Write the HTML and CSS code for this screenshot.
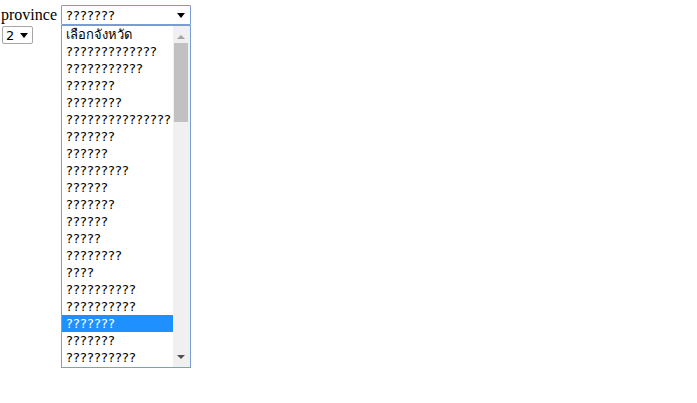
FILE: index.html
```html
<!DOCTYPE html>
<html>
<head>
<meta charset="utf-8">
<link rel="stylesheet" href="styles.css">
</head>
<body>
<div class="page">
<div class="row1">
  <span class="label">province</span>
  <div class="select main">
    <span class="value">???????</span>
    <span class="arrow"></span>
    <div class="dropdown">
      <ul class="options">
        <li>เลือกจังหวัด</li>
        <li>?????????????</li>
        <li>???????????</li>
        <li>???????</li>
        <li>????????</li>
        <li>???????????????</li>
        <li>???????</li>
        <li>??????</li>
        <li>?????????</li>
        <li>??????</li>
        <li>???????</li>
        <li>??????</li>
        <li>?????</li>
        <li>????????</li>
        <li>????</li>
        <li>??????????</li>
        <li>??????????</li>
        <li class="selected">???????</li>
        <li>???????</li>
        <li>??????????</li>
      </ul>
      <div class="scrollbar">
        <span class="sb-up"></span>
        <span class="sb-thumb"></span>
        <span class="sb-down"></span>
      </div>
    </div>
  </div>
</div>
<div class="row2">
  <div class="select small">
    <span class="value">2</span>
    <span class="arrow"></span>
  </div>
</div>
</div>
</body>
</html>
```
FILE: styles.css
```css
html, body {
  margin: 0;
  padding: 0;
  background: #ffffff;
}
body {
  font-family: "Liberation Serif", "Times New Roman", serif;
  font-size: 16px;
  color: #000;
}
.page {
  min-height: 403px;
  padding-left: 1px;
}
.row1 {
  display: flex;
  align-items: flex-start;
  height: 25px;
  padding-top: 5px;
  box-sizing: border-box;
  position: relative;
  z-index: 2;
}
.label {
  line-height: 20px;
  margin-right: 4px;
}
.select {
  position: relative;
  box-sizing: border-box;
  display: flex;
  align-items: center;
  font-family: "DejaVu Sans", "Noto Sans", sans-serif;
  font-size: 13px;
  color: #000;
  background: #fff;
}
.main {
  width: 130px;
  height: 20px;
  border: 1px solid #7a9bd6;
  border-radius: 1px;
  padding-left: 4px;
}
.main .value {
  flex: 1;
  letter-spacing: 0.1px;
}
.arrow {
  width: 0;
  height: 0;
  border-left: 4px solid transparent;
  border-right: 4px solid transparent;
  border-top: 5px solid #000;
}
.main .arrow {
  margin-right: 5px;
}
.row2 {
  display: flex;
  padding-left: 1px;
  padding-top: 1px;
}
.small {
  width: 31px;
  height: 18px;
  border: 1px solid #a6a6a6;
  border-radius: 2px;
  padding-left: 3px;
  gap: 6px;
}
.dropdown {
  position: absolute;
  left: -1px;
  top: 19px;
  width: 130px;
  height: 343px;
  box-sizing: border-box;
  border: 1px solid #7a9bd6;
  background: #fff;
  display: flex;
  z-index: 5;
}
.options {
  list-style: none;
  margin: 0;
  padding: 0;
  flex: 1;
  overflow: hidden;
}
.options li {
  height: 17px;
  line-height: 17px;
  padding-left: 4px;
  white-space: nowrap;
  letter-spacing: 0.1px;
  font-family: "DejaVu Sans", "Noto Sans", sans-serif;
  font-size: 13px;
}
.options li:first-child {
  font-family: "Noto Sans", "DejaVu Sans", sans-serif;
  letter-spacing: 0;
}
.options li.selected {
  background: #1e90ff;
  color: #fff;
}
.scrollbar {
  width: 17px;
  background: #f0f0f0;
  display: flex;
  flex-direction: column;
  align-items: center;
}
.sb-up {
  margin-top: 9px;
  width: 0;
  height: 0;
  border-left: 4px solid transparent;
  border-right: 4px solid transparent;
  border-bottom: 4px solid #a3a3a3;
}
.sb-thumb {
  margin-top: 4px;
  width: 14px;
  height: 79px;
  background: #c1c1c1;
}
.sb-down {
  margin-top: auto;
  margin-bottom: 8px;
  width: 0;
  height: 0;
  border-left: 4px solid transparent;
  border-right: 4px solid transparent;
  border-top: 4px solid #505050;
}
```
